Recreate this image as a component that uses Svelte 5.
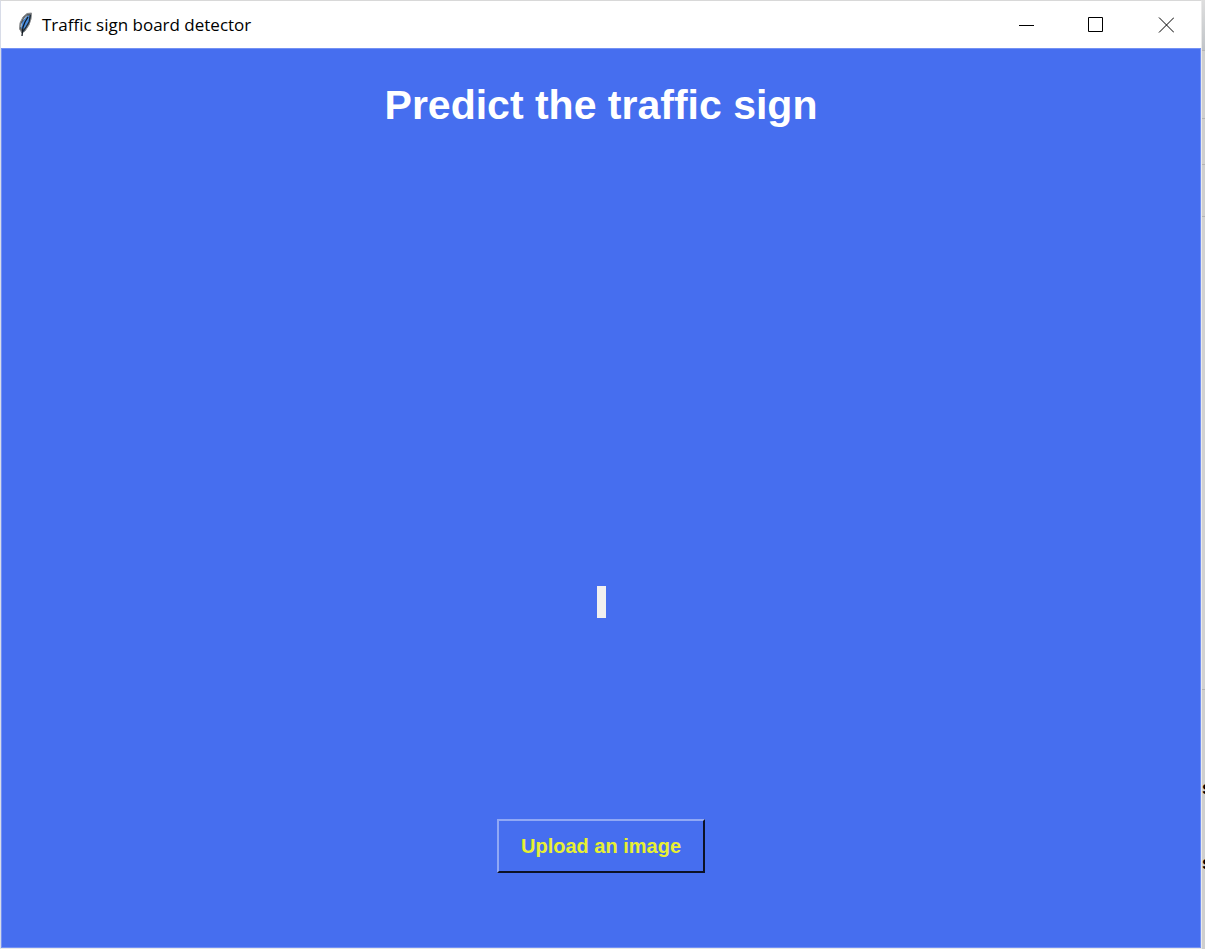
<script>
  let fileInput;
</script>

<div class="desktop">
  <section class="window">
    <header class="titlebar">
      <svg class="feather" width="16" height="26" viewBox="0 0 16 26" aria-hidden="true">
        <path d="M14.500 1 L10 1.500 L6 5 L3 11 L2.500 17 L5 21 L8 19 L12 13 L14 7 Z" fill="#5b5f63" stroke="#8a8c8e" stroke-width="1" />
        <path d="M12.500 3 L8.500 5.500 L5 11 L4 16 L6 17.500 L9 15.500 L12 10 Z" fill="#4a8ee0" />
        <path d="M10 3.500 L6.500 7.500 M4.500 11.500 L4 15" fill="none" stroke="#b4c2cf" stroke-width="1" />
        <path d="M11 5 L8 10 L6 15 L5 24" fill="none" stroke="#101820" stroke-width="1.300" />
        <path d="M13.500 3 L12 10 L9 15 L6 19.500" fill="none" stroke="#1b2a38" stroke-width="1.200" />
      </svg>
      <span class="title">Traffic sign board detector</span>
      <div class="controls">
        <button aria-label="Minimize">
          <svg width="16" height="16" viewBox="0 0 16 16"><path d="M1 8.500H16" /></svg>
        </button>
        <button aria-label="Maximize">
          <svg width="16" height="16" viewBox="0 0 16 16"><path d="M.5 .5H14.500V14.500H.5Z" /></svg>
        </button>
        <button aria-label="Close">
          <svg width="16" height="16" viewBox="0 0 16 16"><path d="M1 .5L16 15.500M16 .5L1 15.500" /></svg>
        </button>
      </div>
    </header>
    <main>
      <h1>Predict the traffic sign</h1>
      <div class="preview"><output class="result"></output></div>
      <button class="upload" onclick={() => fileInput.click()}>Upload an image</button>
      <input bind:this={fileInput} type="file" accept="image/*" aria-label="Image file" hidden />
    </main>
  </section>
  <aside class="behind">
    <div class="row top"></div>
    <div class="row upper"></div>
    <div class="row middle"></div>
    <div class="row lower"></div>
    <div class="row panel"></div>
    <div class="row lines"><span>s</span><span>s</span></div>
  </aside>
</div>

<style>
  :global(body) {
    margin: 0;
    font-family: "Liberation Sans", Arial, sans-serif;
  }
  .desktop {
    display: flex;
    min-height: 100vh;
    background: #f0f0f0;
  }
  .window {
    flex: 1;
    min-width: 0;
    display: flex;
    flex-direction: column;
    box-sizing: border-box;
    border: 1px solid #e9e9e9;
    border-top-color: #d8d8d8;
    border-left-color: #d8dce8;
  }
  .titlebar {
    display: flex;
    align-items: center;
    height: 47px;
    background: #fff;
    padding-left: 16px;
  }
  .feather {
    margin-right: 9px;
  }
  .title {
    flex: 1;
    font: 17px/24px "Open Sans", "Segoe UI", sans-serif;
    color: #000;
  }
  .controls {
    display: flex;
    height: 100%;
  }
  .controls button {
    width: 70px;
    padding: 0;
    border: 0;
    background: none;
    display: grid;
    place-items: center;
  }
  .controls path {
    fill: none;
    stroke: #000;
    stroke-width: 1;
  }
  main {
    flex: 1;
    display: flex;
    flex-direction: column;
    align-items: center;
    box-sizing: border-box;
    padding: 32px 0 74px;
    border: 1px solid #7391f4;
    background: #466eef;
  }
  h1 {
    margin: 0;
    font-size: 41px;
    line-height: 48px;
    font-weight: 700;
    color: #fff;
  }
  .preview {
    flex: 1;
    display: flex;
    align-items: flex-end;
    padding-bottom: 201px;
  }
  .result {
    width: 9px;
    height: 32px;
    background: #f0f0f0;
  }
  .upload {
    padding: 0 22px;
    font: 700 20px/50px "Liberation Sans", Arial, sans-serif;
    color: #e8f032;
    background: #466eef;
    border: 2px solid;
    border-color: #90a8f5 #0c1228 #0c1228 #90a8f5;
    border-radius: 0;
  }
  .behind {
    width: 3px;
    display: flex;
    flex-direction: column;
    overflow: hidden;
    background: #cfcfcf;
  }
  .row {
    box-sizing: border-box;
    border-bottom: 1px solid #b4b4b4;
  }
  .top {
    height: 51px;
    background: linear-gradient(#dedede, #c0c4c8);
  }
  .upper {
    height: 68px;
  }
  .middle {
    height: 46px;
  }
  .lower {
    height: 52px;
  }
  .panel {
    height: 473px;
    background: #d2d2d2;
  }
  .lines {
    flex: 1;
    border: 0;
    padding-top: 86px;
    display: flex;
    flex-direction: column;
    gap: 51px;
    font: 700 18px/24px "Liberation Sans", Arial, sans-serif;
  }
</style>
